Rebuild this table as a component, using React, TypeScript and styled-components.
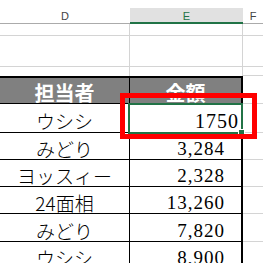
import React from 'react';
import styled, { createGlobalStyle } from 'styled-components';

const GRID = '#d4d4d4';
const EXCEL_GREEN = '#217346';

const GlobalStyle = createGlobalStyle`
  html, body {
    margin: 0;
    padding: 0;
    background: #fff;
  }
`;

const Sheet = styled.div`
  position: relative;
  width: 263px;
  height: 263px;
  overflow: hidden;
  padding-top: 8px;
  box-sizing: border-box;
  background: #fff;
`;

const Row = styled.div<{ $h: number }>`
  display: grid;
  grid-template-columns: 130px 113px 1fr;
  height: ${({ $h }) => $h}px;
`;

const ColHeader = styled.div<{ $selected?: boolean }>`
  display: flex;
  align-items: center;
  justify-content: center;
  box-sizing: border-box;
  font-family: 'Liberation Sans', Arial, sans-serif;
  font-size: 11px;
  color: ${({ $selected }) => ($selected ? EXCEL_GREEN : '#444')};
  background: ${({ $selected }) => ($selected ? '#e1e1e1' : '#fff')};
  border-bottom: ${({ $selected }) => ($selected ? `2px solid ${EXCEL_GREEN}` : '1px solid #ababab')};
  padding-top: ${({ $selected }) => ($selected ? 1 : 0)}px;
`;

const GridCell = styled.div<{ $noBottom?: boolean; $noRight?: boolean }>`
  box-sizing: border-box;
  border-bottom: ${({ $noBottom }) => ($noBottom ? 'none' : `1px solid ${GRID}`)};
  border-right: ${({ $noRight }) => ($noRight ? 'none' : `1px solid ${GRID}`)};
`;

const HeadCell = styled.div<{ $last?: boolean }>`
  display: flex;
  align-items: center;
  justify-content: center;
  box-sizing: border-box;
  padding-top: 4px;
  background: #808080;
  color: #fff;
  font-family: 'Noto Sans CJK JP', sans-serif;
  font-weight: bold;
  font-size: 20px;
  line-height: 1;
  border-top: 2px solid #000;
  border-bottom: 1px solid #000;
  border-right: ${({ $last }) => ($last ? '2px' : '1px')} solid #000;
`;

const NameCell = styled.div`
  display: flex;
  align-items: center;
  justify-content: center;
  box-sizing: border-box;
  padding-top: 5px;
  font-family: 'Noto Sans CJK JP', sans-serif;
  font-size: 19px;
  font-weight: 300;
  line-height: 1;
  color: #000;
  border-bottom: 1px solid #000;
  border-right: 1px solid #000;
`;

// 数値は右寄せ。書式付きの数値は右に余白を残す
const AmountCell = styled.div<{ $pad: number; $size: number }>`
  display: flex;
  align-items: center;
  justify-content: flex-end;
  box-sizing: border-box;
  padding-top: 5px;
  padding-right: ${({ $pad }) => $pad}px;
  font-family: 'Liberation Serif', 'Times New Roman', serif;
  font-size: ${({ $size }) => $size}px;
  letter-spacing: 1px;
  line-height: 1;
  color: #000;
  border-bottom: 1px solid #000;
  border-right: 2px solid #000;
`;

const Selection = styled.div`
  position: absolute;
  left: 128px;
  top: 103px;
  width: 115px;
  height: 31px;
  box-sizing: border-box;
  border: 2px solid ${EXCEL_GREEN};
`;

const FillHandle = styled.div`
  position: absolute;
  right: -3px;
  bottom: -3px;
  width: 5px;
  height: 5px;
  background: ${EXCEL_GREEN};
  outline: 1px solid #fff;
`;

const Callout = styled.div`
  position: absolute;
  left: 120px;
  top: 93px;
  width: 137px;
  height: 46px;
  box-sizing: border-box;
  border: 5px solid #ff0000;
`;

type Entry = { name: string; amount: string; height: number; pad?: number; size?: number };

const entries: Entry[] = [
  { name: 'ウシシ', amount: '1750', height: 29, pad: 2, size: 20 },
  { name: 'みどり', amount: '3,284', height: 27 },
  { name: 'ヨッスィー', amount: '2,328', height: 27 },
  { name: '24面相', amount: '13,260', height: 27 },
  { name: 'みどり', amount: '7,820', height: 28 },
  { name: 'ウシシ', amount: '8,900', height: 27 },
];

function App() {
  return (
    <Sheet>
      <GlobalStyle />
      <Row $h={16}>
        <ColHeader>D</ColHeader>
        <ColHeader $selected>E</ColHeader>
        <ColHeader>F</ColHeader>
      </Row>
      <Row $h={12}>
        <GridCell />
        <GridCell />
        <GridCell $noRight />
      </Row>
      <Row $h={31}>
        <GridCell />
        <GridCell />
        <GridCell $noRight />
      </Row>
      <Row $h={9}>
        <GridCell $noBottom />
        <GridCell $noBottom />
        <GridCell $noRight />
      </Row>
      <Row $h={28}>
        <HeadCell>担当者</HeadCell>
        <HeadCell $last>金額</HeadCell>
        <GridCell $noRight />
      </Row>
      {entries.map((entry, i) => (
        <Row $h={entry.height} key={i}>
          <NameCell>{entry.name}</NameCell>
          <AmountCell $pad={entry.pad ?? 16} $size={entry.size ?? 19}>
            {entry.amount}
          </AmountCell>
          <GridCell $noRight />
        </Row>
      ))}
      <Selection>
        <FillHandle />
      </Selection>
      <Callout />
    </Sheet>
  );
}

export default App;
